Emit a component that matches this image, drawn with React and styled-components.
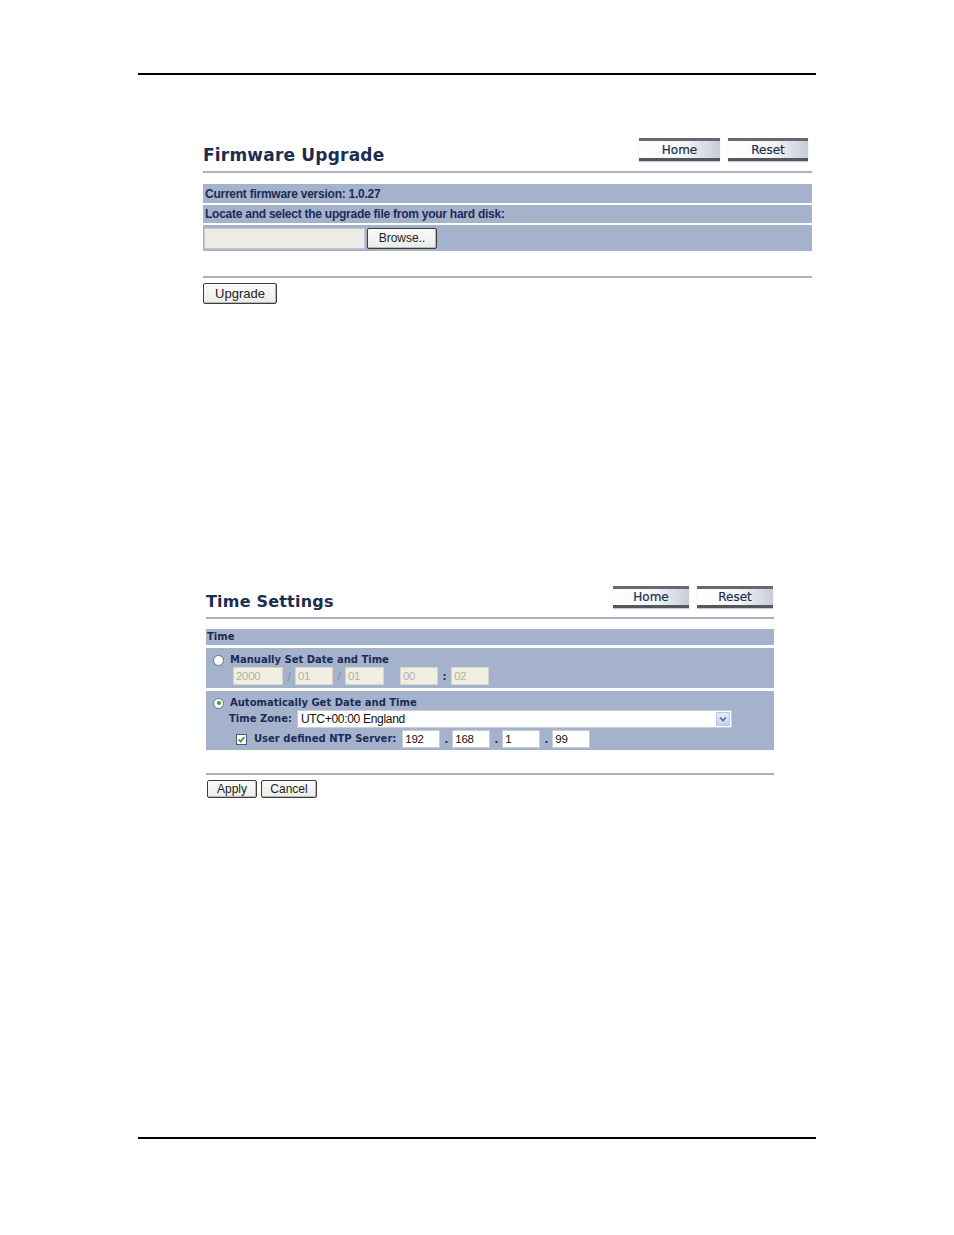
import React from 'react'
import styled, { createGlobalStyle } from 'styled-components'

const colors = {
    navy: '#1c2b57',
    row: '#a4b3cb',
    rule: '#aab4c4',
    disabledBg: '#f1efe2',
}

const GlobalStyle = createGlobalStyle`
    body {
        margin: 0;
        background: #fff;
        font-family: "Liberation Sans", Arial, sans-serif;
    }
`

const Page = styled.div`
    width: 954px;
    height: 1235px;
    padding: 73px 138px 96px;
    box-sizing: border-box;
    display: flex;
    flex-direction: column;
`

const PageRule = styled.div`
    height: 2px;
    background: #000;
    flex-shrink: 0;

    &:last-child {
        margin-top: auto;
    }
`

const Panel = styled.section`
    width: ${(p) => p.$width}px;
    margin-left: ${(p) => p.$left}px;
    margin-top: ${(p) => p.$top}px;
`

const Header = styled.div`
    display: flex;
    justify-content: space-between;
    align-items: flex-start;
    height: ${(p) => p.$height}px;
`

const Title = styled.h1`
    margin: 0;
    align-self: flex-end;
    padding-bottom: ${(p) => p.$pad}px;
    font-family: "DejaVu Sans", Verdana, sans-serif;
    font-size: ${(p) => p.$size}px;
    font-weight: bold;
    color: #1d2d4f;
    letter-spacing: 0.2px;
`

const NavButtons = styled.div`
    display: flex;
    gap: ${(p) => p.$gap}px;
    margin: 1px ${(p) => p.$right}px 0 0;
`

const NavButton = styled.button`
    width: ${(p) => p.$w}px;
    height: ${(p) => p.$h}px;
    padding: 0;
    border: none;
    border-top: 3px solid #666a70;
    border-bottom: 3px solid #54585e;
    background: linear-gradient(90deg, #ffffff 0%, #f4f5f8 55%, #c7ccd8 100%);
    font-family: "DejaVu Sans", Verdana, sans-serif;
    font-size: 12px;
    color: #1d2d4f;
    -webkit-text-stroke: 0.2px #1d2d4f;
    box-shadow: 0 1px 1px #c9ccd3;
`

const Rule = styled.div`
    height: 2px;
    background: ${colors.rule};
    margin-top: ${(p) => p.$top || 0}px;
`

const Rows = styled.div`
    display: flex;
    flex-direction: column;
    gap: ${(p) => p.$gap}px;
    margin-top: ${(p) => p.$top}px;
`

const Row = styled.div`
    background: ${colors.row};
    min-height: ${(p) => p.$h}px;
    display: flex;
    flex-direction: column;
    justify-content: ${(p) => (p.$top ? 'flex-start' : 'center')};
    gap: ${(p) => p.$gap || 0}px;
    padding: ${(p) => p.$pad || '0 2px'};
    box-sizing: border-box;
    color: ${colors.navy};
`

const RowText = styled.span`
    font-family: "Liberation Sans", Arial, sans-serif;
    font-weight: bold;
    font-size: 12px;
    letter-spacing: -0.25px;
`

const FileLine = styled.div`
    display: flex;
    align-items: center;
    gap: 2px;
`

const FileInput = styled.div`
    width: 161px;
    height: 21px;
    background: #ecebe6;
    border: 1px solid #c8c8c8;
    box-sizing: border-box;
`

const PlainButton = styled.button`
    height: ${(p) => p.$h}px;
    width: ${(p) => p.$w}px;
    padding: 0;
    border: 1px solid #3d3d3d;
    border-radius: 2px;
    background: linear-gradient(#fbfbfb, #ebebe8);
    font-family: "Liberation Sans", Arial, sans-serif;
    font-size: ${(p) => p.$size || 12}px;
    color: #222;
    box-shadow: inset -1px -1px 0 #b9b9b9;
`

const Actions = styled.div`
    display: flex;
    gap: 4px;
    margin: ${(p) => p.$top}px 0 0 ${(p) => p.$left || 0}px;
`

const Label = styled.span`
    font-family: "DejaVu Sans", Verdana, sans-serif;
    font-weight: bold;
    font-size: 10px;
    line-height: 12px;
    color: ${colors.navy};
    white-space: nowrap;
    margin-right: ${(p) => p.$right || 0}px;
`

const Line = styled.div`
    display: flex;
    align-items: center;
    gap: ${(p) => p.$gap || 0}px;
    padding-left: ${(p) => p.$indent || 0}px;
`

const Radio = styled.span`
    width: 11px;
    height: 11px;
    border-radius: 50%;
    border: 1px solid #6d7a8c;
    background: radial-gradient(circle, #fff 55%, #dde2ea 100%);
    box-sizing: border-box;
    margin: 0 6px 0 1px;
    display: flex;
    align-items: center;
    justify-content: center;

    &::after {
        content: '';
        width: 4px;
        height: 4px;
        border-radius: 50%;
        background: ${(p) => (p.$checked ? '#3c9a3c' : 'transparent')};
    }
`

const Check = styled.span`
    width: 11px;
    height: 11px;
    border: 1px solid #4b5a72;
    background: #fff;
    box-sizing: border-box;
    margin-right: 7px;
    display: flex;
    align-items: center;
    justify-content: center;
`

const Field = styled.div`
    width: ${(p) => p.$w}px;
    height: 18px;
    box-sizing: border-box;
    background: ${(p) => (p.$disabled ? colors.disabledBg : '#fff')};
    border: 1px solid ${(p) => (p.$disabled ? '#d6d4c5' : '#c9cdd5')};
    padding-left: 2px;
    font-family: "Liberation Sans", Arial, sans-serif;
    font-size: 11.5px;
    line-height: 16px;
    color: ${(p) => (p.$disabled ? '#b3b1a6' : '#111')};
    letter-spacing: -0.3px;
`

const Sep = styled.span`
    width: ${(p) => p.$w}px;
    text-align: center;
    font-family: "DejaVu Sans", Verdana, sans-serif;
    font-weight: bold;
    font-size: 10px;
    color: ${(p) => (p.$faded ? '#8591a8' : colors.navy)};
`

const Select = styled.div`
    width: 435px;
    height: 18px;
    box-sizing: border-box;
    background: #fff;
    border: 1px solid #c9cdd5;
    display: flex;
    align-items: center;
    justify-content: space-between;
    padding-left: 3px;
    font-family: "Liberation Sans", Arial, sans-serif;
    font-size: 12px;
    letter-spacing: -0.3px;
    color: #111;
`

const SelectArrow = styled.span`
    width: 14px;
    height: 14px;
    margin-right: 1px;
    background: linear-gradient(#e6edfb, #c3d2f0);
    border: 1px solid #b7c6e4;
    box-sizing: border-box;
    display: flex;
    align-items: center;
    justify-content: center;
`

function IpFields({ values }) {
    return values.map((v, i) => (
        <React.Fragment key={`ip-${i}`}>
            {i > 0 && <Sep $w={12}>.</Sep>}
            <Field $w={38}>{v}</Field>
        </React.Fragment>
    ))
}

export default function App() {
    return (
        <React.Fragment>
            <GlobalStyle />
            <Page>
                <PageRule />

                <Panel $width={609} $left={65} $top={62}>
                    <Header $height={34}>
                        <Title $size={17} $pad={6}>
                            Firmware Upgrade
                        </Title>
                        <NavButtons $gap={8} $right={4}>
                            <NavButton $w={81} $h={23}>Home</NavButton>
                            <NavButton $w={80} $h={23}>Reset</NavButton>
                        </NavButtons>
                    </Header>
                    <Rule />
                    <Rows $gap={2} $top={11}>
                        <Row $h={19}>
                            <RowText>Current firmware version: 1.0.27</RowText>
                        </Row>
                        <Row $h={18}>
                            <RowText>
                                Locate and select the upgrade file from your hard disk:
                            </RowText>
                        </Row>
                        <Row $h={26} $pad="0 1px">
                            <FileLine>
                                <FileInput />
                                <PlainButton $w={70} $h={21}>
                                    Browse..
                                </PlainButton>
                            </FileLine>
                        </Row>
                    </Rows>
                    <Rule $top={25} />
                    <Actions $top={5}>
                        <PlainButton $w={74} $h={21} $size={13}>
                            Upgrade
                        </PlainButton>
                    </Actions>
                </Panel>

                <Panel $width={568} $left={68} $top={281}>
                    <Header $height={32}>
                        <Title $size={16} $pad={6}>
                            Time Settings
                        </Title>
                        <NavButtons $gap={8} $right={1}>
                            <NavButton $w={76} $h={22}>Home</NavButton>
                            <NavButton $w={76} $h={22}>Reset</NavButton>
                        </NavButtons>
                    </Header>
                    <Rule />
                    <Rows $gap={3} $top={10}>
                        <Row $h={16} $pad="0 1px">
                            <Label>Time</Label>
                        </Row>
                        <Row $h={40} $top $gap={1} $pad="6px 6px 2px 6px">
                            <Line>
                                <Radio />
                                <Label>Manually Set Date and Time</Label>
                            </Line>
                            <Line $indent={21}>
                                <Field $w={50} $disabled>2000</Field>
                                <Sep $w={12} $faded>/</Sep>
                                <Field $w={38} $disabled>01</Field>
                                <Sep $w={12} $faded>/</Sep>
                                <Field $w={39} $disabled>01</Field>
                                <Sep $w={16} />
                                <Field $w={38} $disabled>00</Field>
                                <Sep $w={13}>:</Sep>
                                <Field $w={38} $disabled>02</Field>
                            </Line>
                        </Row>
                        <Row $h={59} $top $gap={1} $pad="6px 6px 2px 6px">
                            <Line>
                                <Radio $checked />
                                <Label>Automatically Get Date and Time</Label>
                            </Line>
                            <Line $indent={17} $gap={5}>
                                <Label>Time Zone:</Label>
                                <Select>
                                    UTC+00:00 England
                                    <SelectArrow>
                                        <svg width="8" height="6" viewBox="0 0 8 6">
                                            <path
                                                d="M1 1.5 L4 4.5 L7 1.5"
                                                fill="none"
                                                stroke="#4d6aa8"
                                                strokeWidth="1.6"
                                            />
                                        </svg>
                                    </SelectArrow>
                                </Select>
                            </Line>
                            <Line $indent={24} style={{ marginTop: 1 }}>
                                <Check>
                                    <svg width="9" height="9" viewBox="0 0 9 9">
                                        <path
                                            d="M1.5 4.5 L3.6 6.6 L7.5 2"
                                            fill="none"
                                            stroke="#2f8f2f"
                                            strokeWidth="1.6"
                                        />
                                    </svg>
                                </Check>
                                <Label $right={6}>User defined NTP Server:</Label>
                                <IpFields values={['192', '168', '1', '99']} />
                            </Line>
                        </Row>
                    </Rows>
                    <Rule $top={23} />
                    <Actions $top={5} $left={1}>
                        <PlainButton $w={50} $h={18} $size={12}>
                            Apply
                        </PlainButton>
                        <PlainButton $w={56} $h={18} $size={12}>
                            Cancel
                        </PlainButton>
                    </Actions>
                </Panel>

                <PageRule />
            </Page>
        </React.Fragment>
    )
}
